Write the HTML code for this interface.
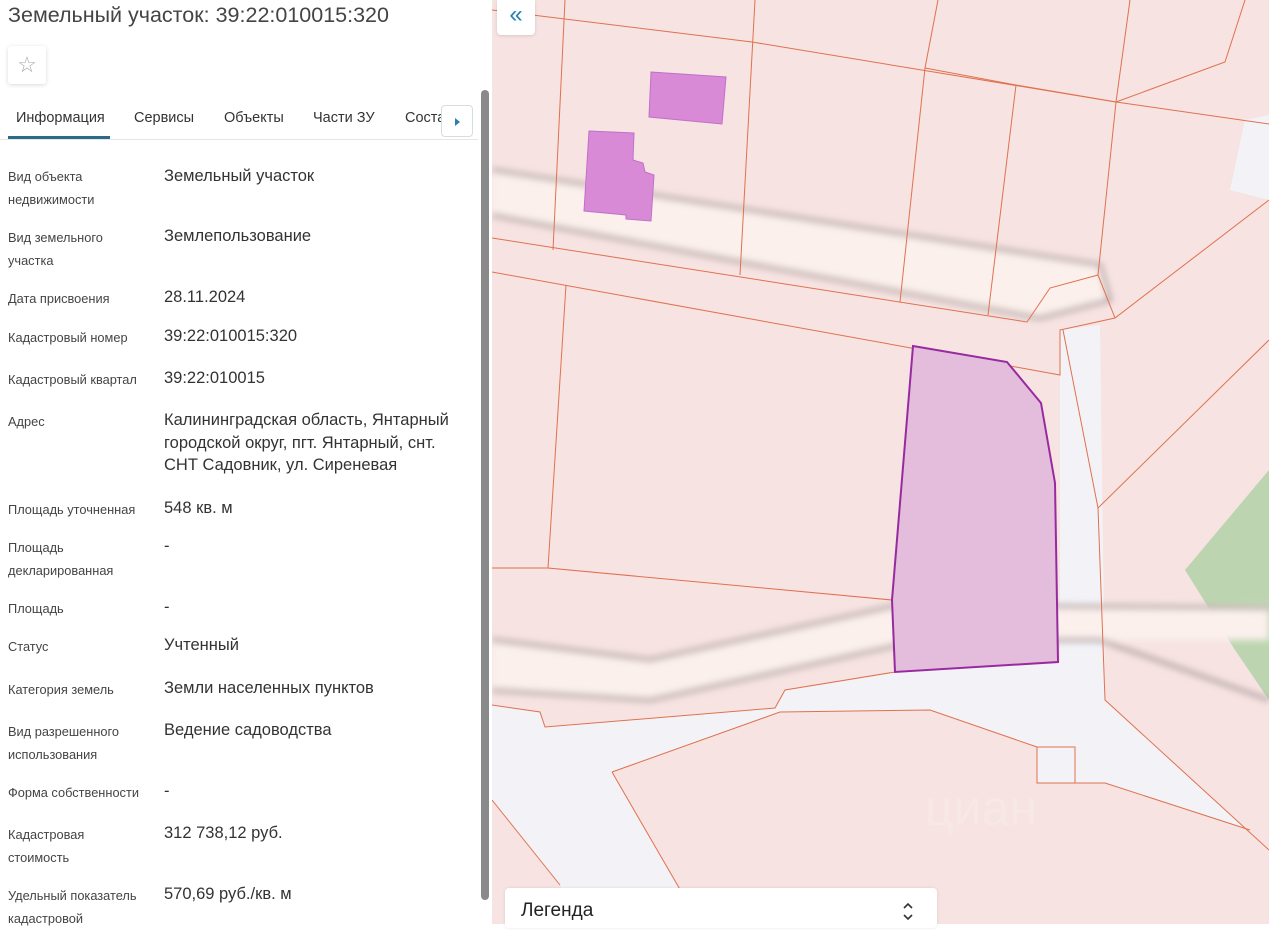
<!DOCTYPE html>
<html><head><meta charset="utf-8"><style>
*{margin:0;padding:0;box-sizing:border-box}
body{width:1269px;height:924px;overflow:hidden;position:relative;background:#fff;font-family:"Liberation Sans",Arial,sans-serif;color:#333}
.panel{position:absolute;left:0;top:0;width:492px;height:924px;background:#fff}
.t{position:absolute;white-space:nowrap}
.lab{position:absolute;left:8px;font-size:12.8px;line-height:22.5px;color:#444}
.val{position:absolute;left:164px;font-size:16.5px;line-height:22.5px;color:#333}
.tab{position:absolute;top:110px;font-size:14.5px;color:#333}
</style></head><body>
<div class="panel">
<div class="t" style="left:8px;top:3px;font-size:21.5px;color:#444">Земельный участок: 39:22:010015:320</div>
<div style="position:absolute;left:8px;top:46px;width:38px;height:38px;background:#fff;box-shadow:0 1px 4px rgba(0,0,0,.15);border-radius:3px;text-align:center;line-height:38px;font-size:22px;color:#aaa">☆</div>
<div class="tab" style="left:16px">Информация</div>
<div class="tab" style="left:134px">Сервисы</div>
<div class="tab" style="left:224px">Объекты</div>
<div class="tab" style="left:313px">Части ЗУ</div>
<div class="tab" style="left:405px">Соста</div>
<div style="position:absolute;left:8px;top:136px;width:102px;height:3px;background:#2a6b8a"></div>
<div style="position:absolute;left:0;top:139px;width:478px;height:1px;background:#e6e6e6"></div>
<div style="position:absolute;left:441px;top:105px;width:32px;height:32px;background:#fff;border:1px solid #d4dde4;border-radius:4px"><div style="position:absolute;left:13px;top:12px;width:0;height:0;border-left:5px solid #2a7fb0;border-top:4px solid transparent;border-bottom:4px solid transparent"></div></div>
<div style="position:absolute;left:481px;top:90px;width:8px;height:810px;background:#8a8a8a;border-radius:4px"></div>

<div class="lab" style="top:166px">Вид объекта<br>недвижимости</div><div class="val" style="top:165px">Земельный участок</div>
<div class="lab" style="top:227px">Вид земельного<br>участка</div><div class="val" style="top:225px">Землепользование</div>
<div class="lab" style="top:288px">Дата присвоения</div><div class="val" style="top:286px">28.11.2024</div>
<div class="lab" style="top:327px">Кадастровый номер</div><div class="val" style="top:325px">39:22:010015:320</div>
<div class="lab" style="top:369px">Кадастровый квартал</div><div class="val" style="top:367px">39:22:010015</div>
<div class="lab" style="top:411px">Адрес</div><div class="val" style="top:409px">Калининградская область, Янтарный<br>городской округ, пгт. Янтарный, снт.<br>СНТ Садовник, ул. Сиреневая</div>
<div class="lab" style="top:499px">Площадь уточненная</div><div class="val" style="top:497px">548 кв. м</div>
<div class="lab" style="top:537px">Площадь<br>декларированная</div><div class="val" style="top:535px">-</div>
<div class="lab" style="top:598px">Площадь</div><div class="val" style="top:596px">-</div>
<div class="lab" style="top:636px">Статус</div><div class="val" style="top:634px">Учтенный</div>
<div class="lab" style="top:679px">Категория земель</div><div class="val" style="top:677px">Земли населенных пунктов</div>
<div class="lab" style="top:721px">Вид разрешенного<br>использования</div><div class="val" style="top:719px">Ведение садоводства</div>
<div class="lab" style="top:782px">Форма собственности</div><div class="val" style="top:780px">-</div>
<div class="lab" style="top:824px">Кадастровая<br>стоимость</div><div class="val" style="top:822px">312 738,12 руб.</div>
<div class="lab" style="top:885px">Удельный показатель<br>кадастровой</div><div class="val" style="top:883px">570,69 руб./кв. м</div>
</div>

<svg style="position:absolute;left:492px;top:0" width="777" height="924" viewBox="492 0 777 924">
<defs><filter id="b"><feGaussianBlur stdDeviation="3.5"/></filter></defs>
<rect x="492" y="0" width="777" height="924" fill="#f6e3e2"/>
<g fill="#f3f3f7">
<polygon points="1245,120 1269,115 1269,200 1230,190"/>
<polygon points="492,705 540,712 545,727 775,708 785,690 895,672 1060,662 1060,330 1100,325 1105,700 1269,850 1269,924 492,924"/>
</g>
<g fill="#f6e3e2">
<polygon points="612,772 780,712 930,710 1037,747 1037,783 1105,783 1250,830 1269,850 1269,924 700,924"/>
<polygon points="492,800 560,885 575,924 492,924"/>
</g>
<polygon points="1185,570 1269,470 1269,700 1235,650" fill="#bcd5b0"/>
<g filter="url(#b)">
<polygon points="492,170 1100,265 1105,300 1040,318 492,215" fill="#fbf0ec"/>
<polyline points="492,170 1100,265 1110,300 1040,318 492,215" fill="none" stroke="#a89a9a" stroke-width="3.5"/>
<polygon points="492,640 650,660 900,605 1269,605 1269,640 920,640 650,700 492,690" fill="#fbf0ec"/>
<polyline points="492,640 650,660 900,605 1269,608" fill="none" stroke="#a89a9a" stroke-width="3.5"/>
<polyline points="492,690 650,700 920,640 1100,640 1269,700" fill="none" stroke="#a89a9a" stroke-width="3.5"/>
</g>
<g fill="none" stroke="#e0714f" stroke-width="1">
<polyline points="492,10 752,42 1116,102 1269,124"/>
<polyline points="565,0 553,250"/><polyline points="755,0 740,275"/><polyline points="938,0 925,68 900,302"/>
<polyline points="1130,0 1116,102 1098,275 1115,318"/><polyline points="1245,0 1225,62 1116,102"/>
<polyline points="925,68 1016,85 988,315"/><polyline points="1016,85 1116,102"/>
<polyline points="492,238 1027,322 1050,288 1098,275"/>
<polyline points="492,272 1060,375 1060,330 1115,318 1269,200"/>
<polyline points="566,285 548,568 892,600"/>
<polyline points="1063,330 1098,508 1269,340"/>
<polyline points="492,568 548,568"/>
<polyline points="1098,508 1105,700 1269,850"/>
<polyline points="612,772 780,712 930,710 1037,747 1037,783 1075,783 1075,747 1037,747"/>
<polyline points="1075,783 1105,783 1250,830"/>
<polyline points="492,705 540,712 545,727 775,708 785,690 895,672"/>
<polyline points="612,772 700,924"/><polyline points="492,800 560,885"/>
</g>
<polygon points="913,346 1007,362 1041,403 1055,483 1058,662 895,672 892,600" fill="#e3bddb" stroke="#982aa0" stroke-width="2"/>
<polygon points="651,72 726,77 722,124 649,117" fill="#d98ad6" stroke="#c070c8"/>
<polygon points="589,131 634,133 633,160 643,163 645,172 654,175 651,221 626,219 626,215 584,211" fill="#d98ad6" stroke="#c070c8"/>
<text x="925" y="825" font-family="Liberation Sans,sans-serif" font-size="50" fill="#fff" fill-opacity=".2">циан</text>
</svg>
<div style="position:absolute;left:497px;top:0;width:38px;height:35px;background:#fff;border-radius:0 0 4px 4px;box-shadow:0 1px 3px rgba(0,0,0,.12);color:#2a7fb0;font-size:24px;text-align:center;line-height:30px">«</div>
<div style="position:absolute;left:505px;top:888px;width:432px;height:40px;background:#fff;border-radius:4px;box-shadow:0 0 3px rgba(0,0,0,.1)">
<div style="position:absolute;left:16px;top:12px;font-size:19px;color:#222">Легенда</div>
<svg style="position:absolute;left:398px;top:14px" width="10" height="20"><polyline points="1,6 5,2 9,6" fill="none" stroke="#333" stroke-width="1.6"/><polyline points="1,13 5,17 9,13" fill="none" stroke="#333" stroke-width="1.6"/></svg>
</div>
</body></html>
